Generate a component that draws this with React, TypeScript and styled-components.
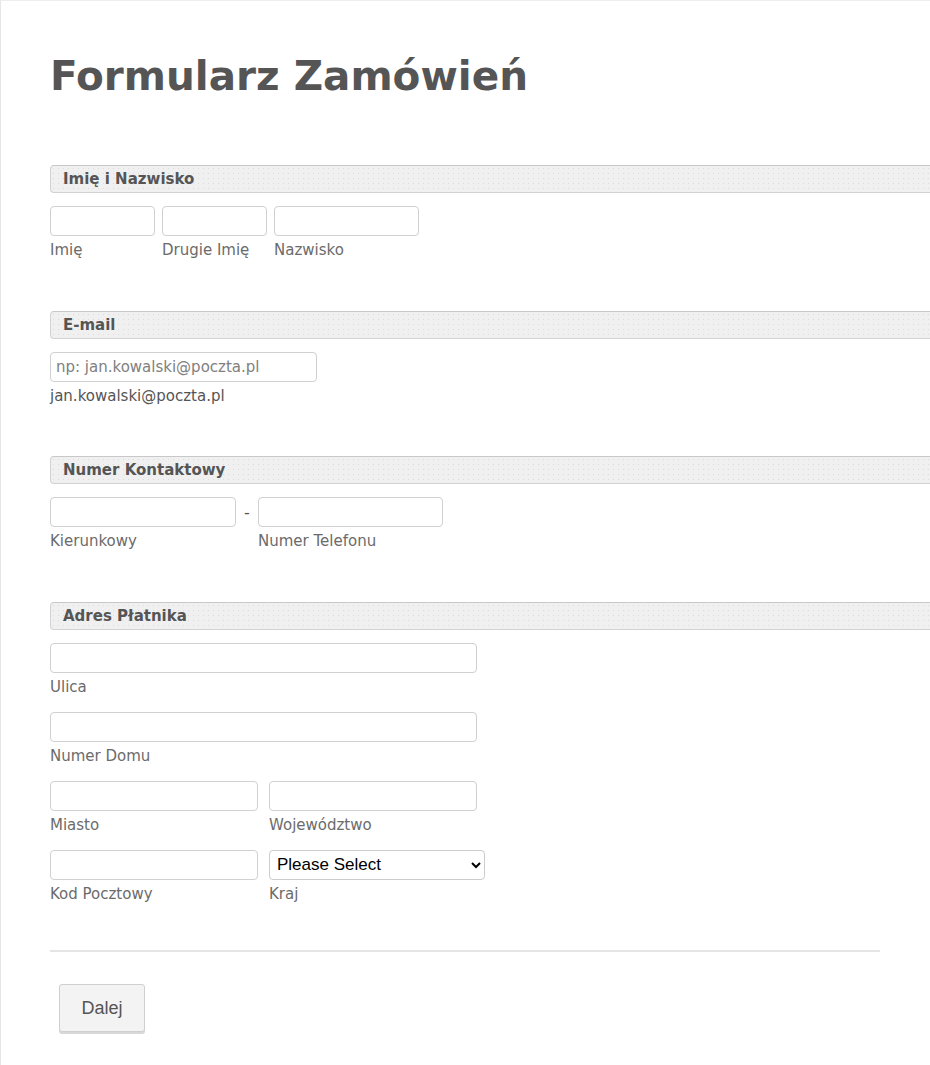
import styled, { createGlobalStyle } from "styled-components";

const GlobalStyle = createGlobalStyle`
  html, body {
    margin: 0;
    padding: 0;
    background: #fff;
    overflow: hidden;
  }
  body {
    font-family: "DejaVu Sans", Verdana, sans-serif;
  }
`;

const dots = `
  background-color: #f0f0f0;
  background-image: radial-gradient(#dcdcdc 0.7px, transparent 0.8px);
  background-size: 5px 5px;
`;

const Page = styled.div`
  min-height: 1065px;
  box-sizing: border-box;
  border-left: 1px solid #e6e6e6;
  border-top: 1px solid #eeeeee;
  padding: 51px 0 0 49px;
`;

const Title = styled.h1`
  margin: 0 0 65px;
  font-size: 40.5px;
  line-height: 48px;
  font-weight: bold;
  color: #555;
`;

const Section = styled.section`
  margin-bottom: 50.5px;
`;

const SectionHeader = styled.div`
  width: 900px;
  height: 28px;
  box-sizing: border-box;
  ${dots}
  border: 1px solid #d2d2d2;
  border-top-color: #c8c8c8;
  border-radius: 4px;
  padding-left: 12px;
  display: flex;
  align-items: center;
  font-size: 15px;
  font-weight: bold;
  color: #555;
  margin-bottom: 13px;
`;

const Row = styled.div<{ $gap?: number }>`
  display: flex;
  align-items: flex-start;
  gap: ${(p) => p.$gap ?? 7}px;

  & + & {
    margin-top: 15px;
  }
`;

const Field = styled.div<{ $w: number }>`
  display: flex;
  flex-direction: column;
  width: ${(p) => p.$w}px;
`;

const Input = styled.input`
  width: 100%;
  height: 30px;
  box-sizing: border-box;
  margin: 0;
  border: 1px solid #d0d0d0;
  border-radius: 4px;
  background-color: #fff;
  background-image: radial-gradient(#efefef 0.6px, transparent 0.7px);
  background-size: 4px 4px;
  padding: 0 5px;
  font-family: "DejaVu Sans", Verdana, sans-serif;
  font-size: 15px;
  color: #444;

  &::placeholder {
    color: #808080;
  }
`;

const Select = styled.select`
  width: 100%;
  height: 30px;
  box-sizing: border-box;
  margin: 0;
  border: 1px solid #ccc;
  border-radius: 4px;
  background: #fff;
  padding: 0 4px 0 3px;
  font-family: "Liberation Sans", Arial, sans-serif;
  font-size: 17px;
  color: #000;
`;

const SubLabel = styled.label<{ $dark?: boolean }>`
  margin-top: 5px;
  font-size: 15px;
  line-height: 19px;
  color: ${(p) => (p.$dark ? "#555" : "#6b6b6b")};
  white-space: nowrap;
`;

const Dash = styled.span`
  width: 22px;
  height: 30px;
  display: flex;
  align-items: center;
  justify-content: center;
  font-size: 16px;
  color: #555;
`;

const Divider = styled.hr`
  width: 830px;
  margin: -4px 0 32px;
  border: 0;
  border-top: 2px solid #e5e5e5;
`;

const Button = styled.button`
  display: block;
  margin-left: 9px;
  width: 86px;
  height: 48px;
  border: 1px solid #cfcfcf;
  border-radius: 3px;
  background: #f3f3f3;
  box-shadow: 0 2px 0 #d8d8d8;
  font-family: "Liberation Sans", Arial, sans-serif;
  font-size: 18px;
  color: #555;
`;

export default function App() {
  return (
    <Page>
      <GlobalStyle />
      <Title>Formularz Zamówień</Title>

      <Section>
        <SectionHeader>Imię i Nazwisko</SectionHeader>
        <Row>
          <Field $w={105}>
            <Input />
            <SubLabel>Imię</SubLabel>
          </Field>
          <Field $w={105}>
            <Input />
            <SubLabel>Drugie Imię</SubLabel>
          </Field>
          <Field $w={145}>
            <Input />
            <SubLabel>Nazwisko</SubLabel>
          </Field>
        </Row>
      </Section>

      <Section>
        <SectionHeader>E-mail</SectionHeader>
        <Row>
          <Field $w={267}>
            <Input placeholder="np: jan.kowalski@poczta.pl" />
            <SubLabel $dark>jan.kowalski@poczta.pl</SubLabel>
          </Field>
        </Row>
      </Section>

      <Section>
        <SectionHeader>Numer Kontaktowy</SectionHeader>
        <Row $gap={0}>
          <Field $w={186}>
            <Input />
            <SubLabel>Kierunkowy</SubLabel>
          </Field>
          <Dash>-</Dash>
          <Field $w={185}>
            <Input />
            <SubLabel>Numer Telefonu</SubLabel>
          </Field>
        </Row>
      </Section>

      <Section>
        <SectionHeader>Adres Płatnika</SectionHeader>
        <Row>
          <Field $w={427}>
            <Input />
            <SubLabel>Ulica</SubLabel>
          </Field>
        </Row>
        <Row>
          <Field $w={427}>
            <Input />
            <SubLabel>Numer Domu</SubLabel>
          </Field>
        </Row>
        <Row $gap={11}>
          <Field $w={208}>
            <Input />
            <SubLabel>Miasto</SubLabel>
          </Field>
          <Field $w={208}>
            <Input />
            <SubLabel>Województwo</SubLabel>
          </Field>
        </Row>
        <Row $gap={11}>
          <Field $w={208}>
            <Input />
            <SubLabel>Kod Pocztowy</SubLabel>
          </Field>
          <Field $w={216}>
            <Select defaultValue="">
              <option value="">Please Select</option>
              <option>Polska</option>
            </Select>
            <SubLabel>Kraj</SubLabel>
          </Field>
        </Row>
      </Section>

      <Divider />
      <Button>Dalej</Button>
    </Page>
  );
}
